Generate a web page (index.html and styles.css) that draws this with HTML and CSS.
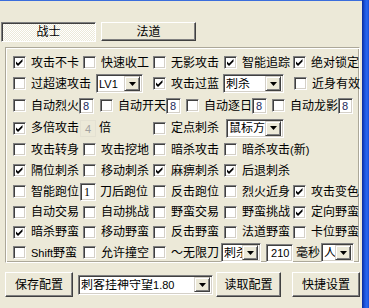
FILE: index.html
```html
<!DOCTYPE html>
<html lang="zh-CN">
<head>
    <meta charset="UTF-8">
    <title>战士设置</title>
    <link rel="stylesheet" href="styles.css">
</head>
<body>
<div class="screen">
    <div class="main">
        <div class="tabs">
            <div class="tab tab-on">战士</div>
            <div class="tab">法道</div>
        </div>

        <div class="group">
            <div class="row">
                <div class="cell w70"><span class="cb on"><svg viewBox="0 0 11 11"><polygon points="2,4.5 4,6.5 8.5,2 8.5,4.5 4,9 2,7"/></svg></span><span class="lb">攻击不卡</span></div>
                <div class="cell w70"><span class="cb"></span><span class="lb">快速收工</span></div>
                <div class="cell w71"><span class="cb"></span><span class="lb">无影攻击</span></div>
                <div class="cell w69"><span class="cb on"><svg viewBox="0 0 11 11"><polygon points="2,4.5 4,6.5 8.5,2 8.5,4.5 4,9 2,7"/></svg></span><span class="lb">智能追踪</span></div>
                <div class="cell"><span class="cb on"><svg viewBox="0 0 11 11"><polygon points="2,4.5 4,6.5 8.5,2 8.5,4.5 4,9 2,7"/></svg></span><span class="lb">绝对锁定</span></div>
            </div>

            <div class="row">
                <div class="cell w140"><span class="cb"></span><span class="lb">过超速攻击</span>
                    <span class="field sel lv"><span class="val">LV1</span><span class="drop"><svg viewBox="0 0 7 4"><polygon points="0,0 7,0 3.5,4"/></svg></span></span></div>
                <div class="cell w141"><span class="cb on"><svg viewBox="0 0 11 11"><polygon points="2,4.5 4,6.5 8.5,2 8.5,4.5 4,9 2,7"/></svg></span><span class="lb">攻击过蓝</span>
                    <span class="field sel skill"><span class="val">刺杀</span><span class="drop"><svg viewBox="0 0 7 4"><polygon points="0,0 7,0 3.5,4"/></svg></span></span></div>
                <div class="cell"><span class="cb"></span><span class="lb">近身有效</span></div>
            </div>

            <div class="row tall">
                <div class="cell w87"><span class="cb"></span><span class="lb">自动烈火</span><span class="field num">8</span></div>
                <div class="cell w86"><span class="cb"></span><span class="lb">自动开天</span><span class="field num">8</span></div>
                <div class="cell w86"><span class="cb"></span><span class="lb">自动逐日</span><span class="field num">8</span></div>
                <div class="cell"><span class="cb"></span><span class="lb">自动龙影</span><span class="field num">8</span></div>
            </div>

            <div class="row mid">
                <div class="cell w140"><span class="cb on"><svg viewBox="0 0 11 11"><polygon points="2,4.5 4,6.5 8.5,2 8.5,4.5 4,9 2,7"/></svg></span><span class="lb">多倍攻击</span>
                    <span class="num-off">4</span><span class="lb unit">倍</span></div>
                <div class="cell"><span class="cb"></span><span class="lb">定点刺杀</span>
                    <span class="field sel dir"><span class="val">鼠标方向</span><span class="drop"><svg viewBox="0 0 7 4"><polygon points="0,0 7,0 3.5,4"/></svg></span></span></div>
            </div>

            <div class="row">
                <div class="cell w70"><span class="cb"></span><span class="lb">攻击转身</span></div>
                <div class="cell w70"><span class="cb"></span><span class="lb">攻击挖地</span></div>
                <div class="cell w71"><span class="cb"></span><span class="lb">暗杀攻击</span></div>
                <div class="cell"><span class="cb"></span><span class="lb">暗杀攻击<span class="lat">(</span>新<span class="lat">)</span></span></div>
            </div>

            <div class="row">
                <div class="cell w70"><span class="cb on"><svg viewBox="0 0 11 11"><polygon points="2,4.5 4,6.5 8.5,2 8.5,4.5 4,9 2,7"/></svg></span><span class="lb">隔位刺杀</span></div>
                <div class="cell w70"><span class="cb"></span><span class="lb">移动刺杀</span></div>
                <div class="cell w71"><span class="cb on"><svg viewBox="0 0 11 11"><polygon points="2,4.5 4,6.5 8.5,2 8.5,4.5 4,9 2,7"/></svg></span><span class="lb">麻痹刺杀</span></div>
                <div class="cell"><span class="cb on"><svg viewBox="0 0 11 11"><polygon points="2,4.5 4,6.5 8.5,2 8.5,4.5 4,9 2,7"/></svg></span><span class="lb">后退刺杀</span></div>
            </div>

            <div class="row">
                <div class="cell w140"><span class="cb"></span><span class="lb">智能跑位</span><span class="field num one">1</span><span class="lb after">刀后跑位</span></div>
                <div class="cell w71"><span class="cb"></span><span class="lb">反击跑位</span></div>
                <div class="cell w69"><span class="cb"></span><span class="lb">烈火近身</span></div>
                <div class="cell"><span class="cb on"><svg viewBox="0 0 11 11"><polygon points="2,4.5 4,6.5 8.5,2 8.5,4.5 4,9 2,7"/></svg></span><span class="lb">攻击变色</span></div>
            </div>

            <div class="row short">
                <div class="cell w70"><span class="cb"></span><span class="lb">自动交易</span></div>
                <div class="cell w70"><span class="cb"></span><span class="lb">自动挑战</span></div>
                <div class="cell w71"><span class="cb"></span><span class="lb">野蛮交易</span></div>
                <div class="cell w69"><span class="cb"></span><span class="lb">野蛮挑战</span></div>
                <div class="cell"><span class="cb on"><svg viewBox="0 0 11 11"><polygon points="2,4.5 4,6.5 8.5,2 8.5,4.5 4,9 2,7"/></svg></span><span class="lb">定向野蛮</span></div>
            </div>

            <div class="row short">
                <div class="cell w70"><span class="cb on"><svg viewBox="0 0 11 11"><polygon points="2,4.5 4,6.5 8.5,2 8.5,4.5 4,9 2,7"/></svg></span><span class="lb">暗杀野蛮</span></div>
                <div class="cell w70"><span class="cb"></span><span class="lb">移动野蛮</span></div>
                <div class="cell w71"><span class="cb"></span><span class="lb">反击野蛮</span></div>
                <div class="cell w69"><span class="cb"></span><span class="lb">法道野蛮</span></div>
                <div class="cell"><span class="cb"></span><span class="lb">卡位野蛮</span></div>
            </div>

            <div class="row">
                <div class="cell w70"><span class="cb"></span><span class="lb"><span class="lat">Shift</span>野蛮</span></div>
                <div class="cell w70"><span class="cb"></span><span class="lb">允许撞空</span></div>
                <div class="cell"><span class="cb"></span><span class="lb">～无限刀</span>
                    <span class="field sel blade"><span class="val">刺杀</span><span class="drop"><svg viewBox="0 0 7 4"><polygon points="0,0 7,0 3.5,4"/></svg></span></span>
                    <span class="field num ms">210</span><span class="lb unit">毫秒</span>
                    <span class="field sel who"><span class="val">人</span><span class="drop"><svg viewBox="0 0 7 4"><polygon points="0,0 7,0 3.5,4"/></svg></span></span></div>
            </div>
        </div>

        <div class="bottom">
            <div class="btn save">保存配置</div>
            <div class="field sel combo"><span class="val">刺客挂神守望<span class="lat">1.80</span></span><span class="drop"><svg viewBox="0 0 7 4"><polygon points="0,0 7,0 3.5,4"/></svg></span></div>
            <div class="btn load">读取配置</div>
            <div class="btn quick">快捷设置</div>
        </div>
    </div>
    <div class="frame"></div>
</div>
</body>
</html>
```

FILE: styles.css
```css
body {
    margin: 0;
    background: #ece9d8;
    font-family: "Liberation Sans", "Noto Sans CJK SC", sans-serif;
    font-size: 12px;
    line-height: 12px;
    color: #000;
    overflow: hidden;
}
.screen {
    display: flex;
    width: 369px;
    height: 308px;
}
.main {
    width: 362px;
    border-top: 1px solid #3a6ddc;
}
.frame {
    width: 7px;
    background: linear-gradient(to right, #0a2a9c, #1d55dc 40%, #2b68f0 70%, #1a4fd6);
}

/* tabs */
.tabs {
    display: flex;
    gap: 5px;
    margin-top: 21px;
    padding-left: 1px;
    height: 20px;
    align-items: flex-start;
}
.tab {
    box-sizing: border-box;
    width: 95px;
    height: 19px;
    display: flex;
    align-items: center;
    justify-content: center;
    border: 1px solid;
    border-color: #fff #404040 #404040 #fff;
    box-shadow: inset -1px -1px #808080;
}
.tab-on {
    height: 20px;
    border-color: #808080 #fff #fff #808080;
    box-shadow: inset 1px 1px #404040;
    background: repeating-conic-gradient(#fff 0 25%, #ece9d8 0 50%) 0 0 / 2px 2px;
}

/* group box */
.group {
    box-sizing: border-box;
    margin: 5px 0 0 5px;
    width: 355px;
    height: 216px;
    padding: 4px 0 0 7px;
    border: 1px solid;
    border-color: #aca899 #fff #fff #aca899;
    box-shadow: inset 1px 1px #fff, inset -1px -1px #aca899;
}
.row {
    display: flex;
    align-items: center;
    height: 21px;
}
.row.tall { height: 23px; }
.row.mid { height: 22px; }
.row.short { height: 20px; }
.cell {
    display: flex;
    align-items: center;
    flex: none;
}
.w69 { width: 69px; }
.w70 { width: 70px; }
.w71 { width: 71px; }
.w86 { width: 86px; }
.w87 { width: 87px; }
.w140 { width: 140px; }
.w141 { width: 141px; }

.cb {
    box-sizing: border-box;
    flex: none;
    width: 13px;
    height: 13px;
    margin-right: 5px;
    background: #fff;
    border: 1px solid;
    border-color: #808080 #fff #fff #808080;
    box-shadow: inset 1px 1px #404040, inset -1px -1px #d4d0c8;
}
.cb svg {
    display: block;
    width: 11px;
    height: 11px;
}
.lb {
    white-space: nowrap;
}
.lat {
    font-size: 11px;
}
.unit { margin-left: 3px; }
.after { margin-left: 4px; }

/* sunken fields */
.field {
    box-sizing: border-box;
    display: flex;
    align-items: center;
    flex: none;
    background: #fff;
    border: 1px solid;
    border-color: #808080 #fff #fff #808080;
    box-shadow: inset 1px 1px #404040, inset -1px -1px #d4d0c8;
}
.num {
    width: 15px;
    height: 16px;
    padding-left: 3px;
    font-size: 11px;
    color: #1a2a5a;
}
.one {
    width: 16px;
    height: 18px;
    margin-left: 1px;
    font-family: "Liberation Serif", serif;
    font-size: 12px;
    color: #000;
}
.num-off {
    box-sizing: border-box;
    width: 16px;
    height: 17px;
    margin-left: 1px;
    padding-left: 4px;
    font-size: 11px;
    line-height: 17px;
    color: #a0a0a0;
    border: 1px solid #e4e1d2;
}
.ms {
    width: 27px;
    height: 18px;
    margin-left: 5px;
    padding-left: 4px;
    color: #000;
}
.sel {
    height: 19px;
    padding: 2px;
    justify-content: space-between;
}
.sel .val {
    overflow: hidden;
    white-space: nowrap;
    flex: 1;
}
.drop {
    box-sizing: border-box;
    flex: none;
    width: 16px;
    height: 15px;
    display: flex;
    align-items: center;
    justify-content: center;
    background: #ece9d8;
    border: 1px solid;
    border-color: #d4d0c8 #404040 #404040 #d4d0c8;
    box-shadow: inset 1px 1px #fff, inset -1px -1px #808080;
}
.drop svg {
    width: 7px;
    height: 4px;
}
.lv { width: 47px; margin-left: 5px; font-size: 11px; }
.skill { width: 61px; margin-left: 4px; }
.dir { width: 58px; margin-left: 7px; }
.blade { width: 40px; margin-left: 2px; }
.who { width: 33px; margin-left: 1px; }

/* bottom buttons */
.bottom {
    display: flex;
    align-items: center;
    margin-top: 9px;
    padding-left: 5px;
    height: 25px;
}
.btn {
    box-sizing: border-box;
    height: 25px;
    display: flex;
    align-items: center;
    justify-content: center;
    border: 1px solid;
    border-color: #fff #404040 #404040 #fff;
    box-shadow: inset -1px -1px #808080;
}
.save { width: 68px; }
.combo { width: 135px; height: 20px; margin-left: 5px; }
.load { width: 65px; margin-left: 3px; }
.quick { width: 68px; margin-left: 11px; }
```
